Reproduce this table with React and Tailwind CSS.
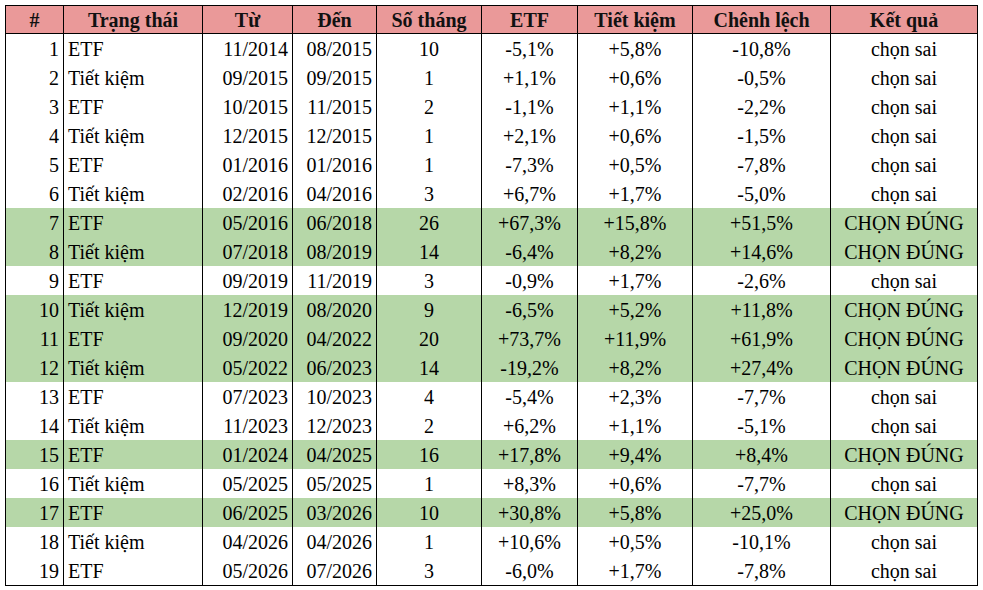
import React from "react";

const rows = [
  [1, "ETF", "11/2014", "08/2015", 10, "-5,1%", "+5,8%", "-10,8%"],
  [2, "Tiết kiệm", "09/2015", "09/2015", 1, "+1,1%", "+0,6%", "-0,5%"],
  [3, "ETF", "10/2015", "11/2015", 2, "-1,1%", "+1,1%", "-2,2%"],
  [4, "Tiết kiệm", "12/2015", "12/2015", 1, "+2,1%", "+0,6%", "-1,5%"],
  [5, "ETF", "01/2016", "01/2016", 1, "-7,3%", "+0,5%", "-7,8%"],
  [6, "Tiết kiệm", "02/2016", "04/2016", 3, "+6,7%", "+1,7%", "-5,0%"],
  [7, "ETF", "05/2016", "06/2018", 26, "+67,3%", "+15,8%", "+51,5%"],
  [8, "Tiết kiệm", "07/2018", "08/2019", 14, "-6,4%", "+8,2%", "+14,6%"],
  [9, "ETF", "09/2019", "11/2019", 3, "-0,9%", "+1,7%", "-2,6%"],
  [10, "Tiết kiệm", "12/2019", "08/2020", 9, "-6,5%", "+5,2%", "+11,8%"],
  [11, "ETF", "09/2020", "04/2022", 20, "+73,7%", "+11,9%", "+61,9%"],
  [12, "Tiết kiệm", "05/2022", "06/2023", 14, "-19,2%", "+8,2%", "+27,4%"],
  [13, "ETF", "07/2023", "10/2023", 4, "-5,4%", "+2,3%", "-7,7%"],
  [14, "Tiết kiệm", "11/2023", "12/2023", 2, "+6,2%", "+1,1%", "-5,1%"],
  [15, "ETF", "01/2024", "04/2025", 16, "+17,8%", "+9,4%", "+8,4%"],
  [16, "Tiết kiệm", "05/2025", "05/2025", 1, "+8,3%", "+0,6%", "-7,7%"],
  [17, "ETF", "06/2025", "03/2026", 10, "+30,8%", "+5,8%", "+25,0%"],
  [18, "Tiết kiệm", "04/2026", "04/2026", 1, "+10,6%", "+0,5%", "-10,1%"],
  [19, "ETF", "05/2026", "07/2026", 3, "-6,0%", "+1,7%", "-7,8%"],
];

const headers = ["#", "Trạng thái", "Từ", "Đến", "Số tháng", "ETF", "Tiết kiệm", "Chênh lệch", "Kết quả"];

// where each column's text sits
const align = [
  "justify-end pr-[4px]",
  "justify-start pl-[4px]",
  "justify-end pr-[4px]",
  "justify-end pr-[4px]",
  "justify-center",
  "justify-center",
  "justify-center",
  "justify-center",
  "justify-center",
];

const gridCols = "grid grid-cols-[58px_139px_90px_84px_105px_96px_115px_138px_147px]";

const App = () => {
  return (
    <div className="min-h-screen bg-white pt-[5px] pl-[5px] font-['Liberation_Serif',serif] text-black">
      <div className="w-[973px] border border-black">
        <div className={`${gridCols} h-[28px] bg-[#ea9999] border-b border-black`}>
          {headers.map((h, i) => (
            <div key={h} className="flex items-center justify-center border-r border-black text-[20px] font-bold leading-none text-[#111]">
              {h}
            </div>
          ))}
        </div>
        {rows.map((r) => {
          const good = r[7].startsWith("+");
          const cells = [...r, good ? "CHỌN ĐÚNG" : "chọn sai"];
          return (
            <div key={r[0]} className={`${gridCols} h-[29px] ${good ? "bg-[#b6d7a8]" : "bg-white"}`}>
              {cells.map((c, i) => (
                <div key={i} className={`flex items-center border-r border-black text-[20px] leading-none ${align[i]}`}>
                  {c}
                </div>
              ))}
            </div>
          );
        })}
      </div>
    </div>
  );
};

export default App;
